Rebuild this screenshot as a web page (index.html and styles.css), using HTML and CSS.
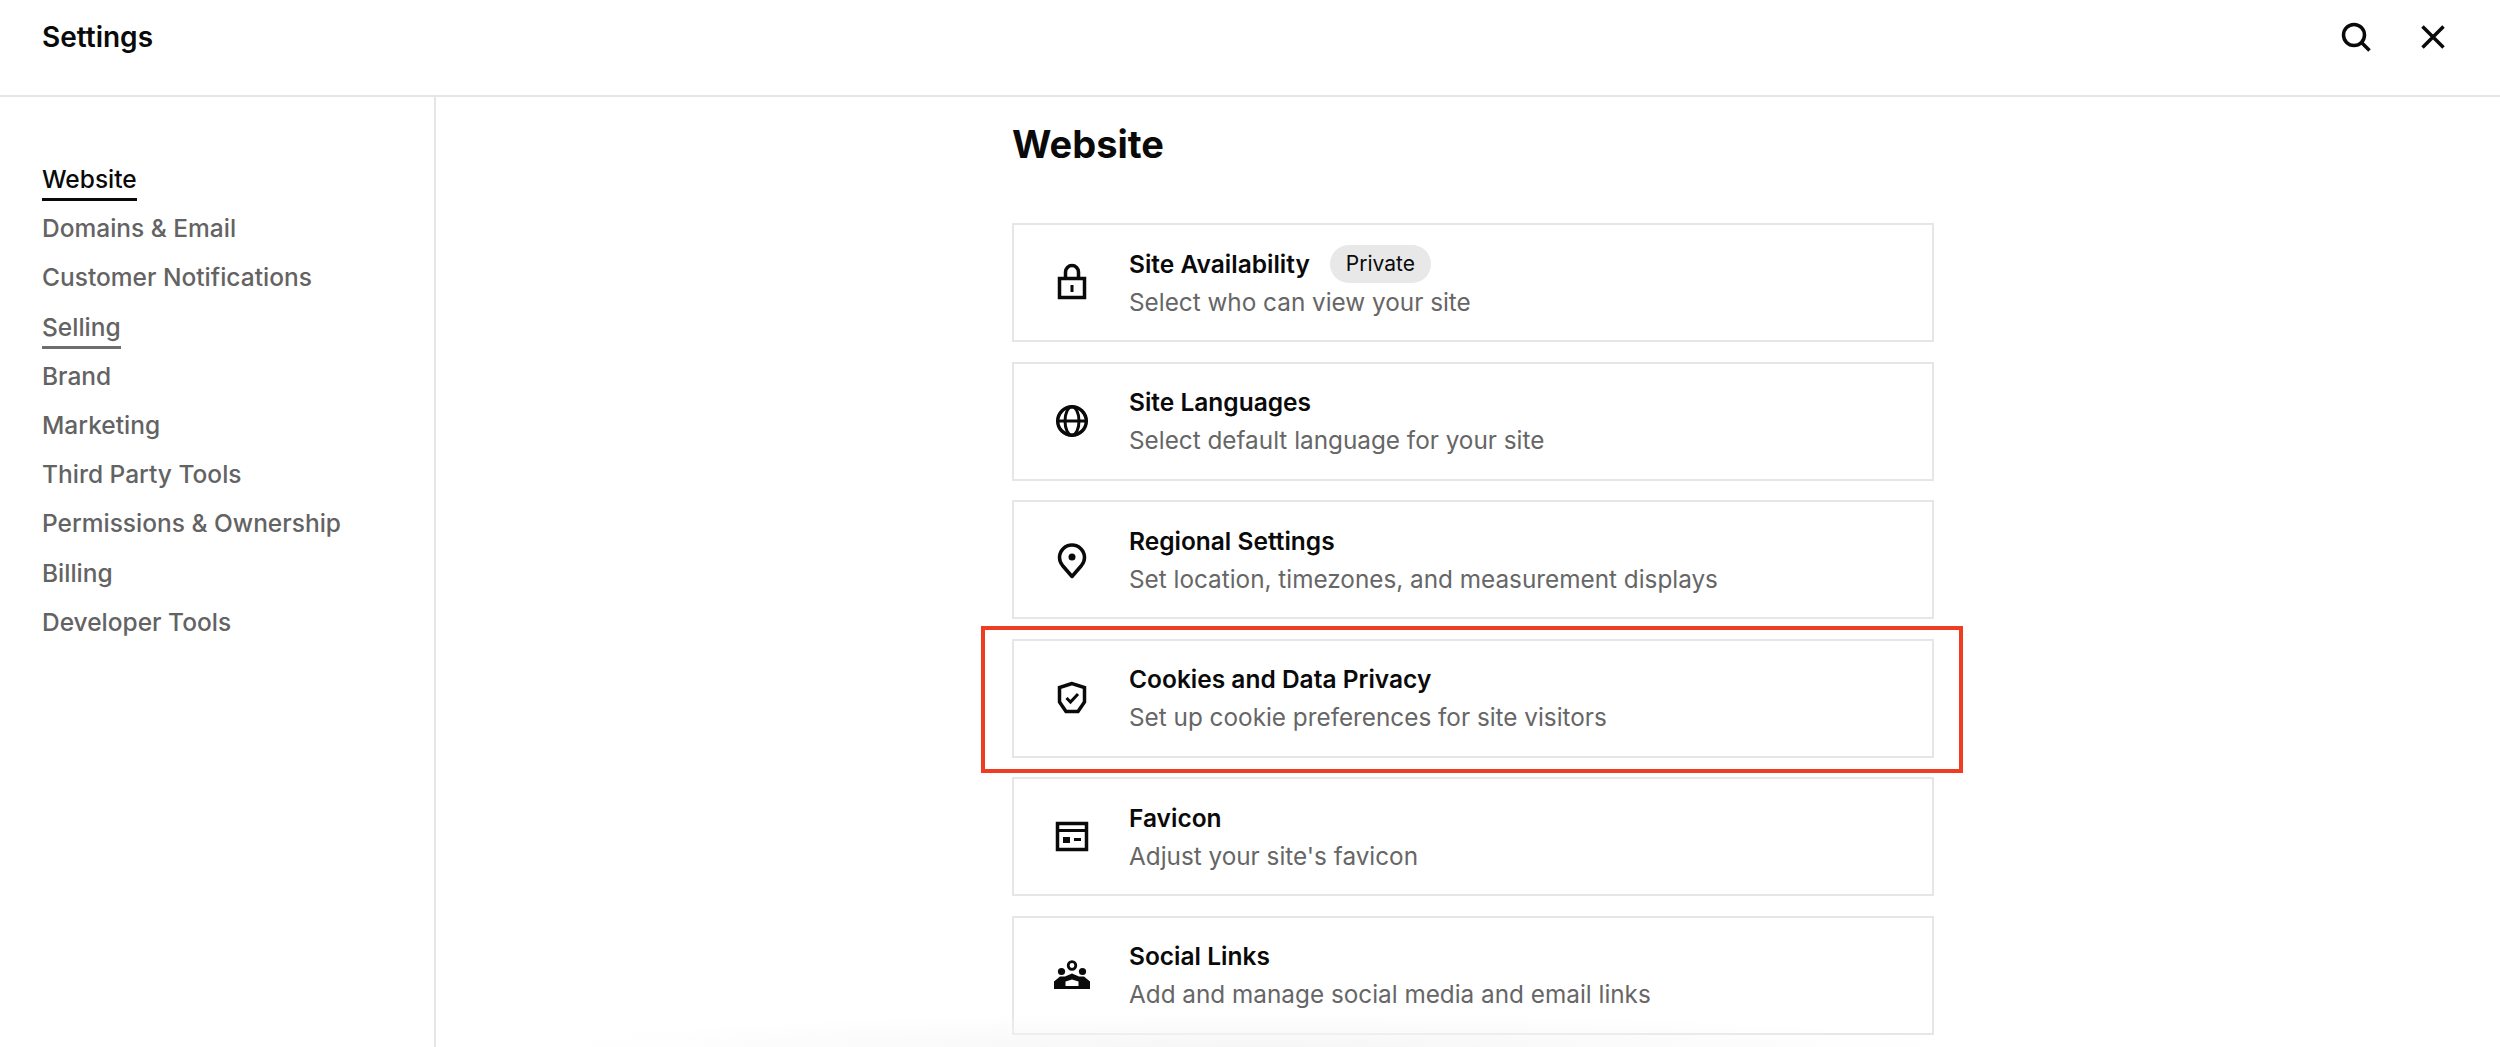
FILE: index.html
```html
<!DOCTYPE html>
<html lang="en">
<head>
  <meta charset="UTF-8">
  <meta name="viewport" content="width=device-width, initial-scale=1.0">
  <title>Settings</title>
  <link rel="stylesheet" href="styles.css">
</head>
<body>
  <header class="top-bar">
    <h1 class="top-title">Settings</h1>
    <div class="top-actions">
      <svg class="top-icon" viewBox="0 0 32 32" fill="none" stroke="#0a0a0a" stroke-width="3.5">
        <circle cx="14" cy="14" r="10.500"/>
        <path d="M22 22l7.500 7.500"/>
      </svg>
      <svg class="top-icon" viewBox="0 0 32 32" fill="none" stroke="#0a0a0a" stroke-width="3.5">
        <path d="M5.500 5.500l21 21M26.500 5.500l-21 21"/>
      </svg>
    </div>
  </header>

  <div class="layout">
    <nav class="side-nav">
      <a class="nav-item active">Website</a>
      <a class="nav-item">Domains &amp; Email</a>
      <a class="nav-item">Customer Notifications</a>
      <a class="nav-item current">Selling</a>
      <a class="nav-item">Brand</a>
      <a class="nav-item">Marketing</a>
      <a class="nav-item">Third Party Tools</a>
      <a class="nav-item">Permissions &amp; Ownership</a>
      <a class="nav-item">Billing</a>
      <a class="nav-item">Developer Tools</a>
    </nav>

    <main class="content">
      <h2 class="page-title">Website</h2>

      <div class="card-list">
        <div class="card">
          <svg class="card-icon" viewBox="0 0 40 40" fill="none" stroke="#0a0a0a" stroke-width="3.500">
            <rect x="7.500" y="15.500" width="25" height="19"/>
            <path d="M13.500 15V9a6.500 6.500 0 0 1 13 0v6"/>
            <path d="M20 22v7" stroke-width="3"/>
          </svg>
          <div class="card-text">
            <div class="card-head">
              <span class="card-title">Site Availability</span>
              <span class="pill">Private</span>
            </div>
            <p class="card-desc">Select who can view your site</p>
          </div>
        </div>

        <div class="card">
          <svg class="card-icon" viewBox="0 0 40 40" fill="none" stroke="#0a0a0a" stroke-width="3.500">
            <circle cx="20" cy="20" r="14.300"/>
            <ellipse cx="20" cy="20" rx="7" ry="14.300" stroke-width="3"/>
            <path d="M5 20h30" stroke-width="3"/>
          </svg>
          <div class="card-text">
            <span class="card-title">Site Languages</span>
            <p class="card-desc">Select default language for your site</p>
          </div>
        </div>

        <div class="card">
          <svg class="card-icon" viewBox="0 0 40 40" fill="none" stroke="#0a0a0a" stroke-width="3.500">
            <path d="M20 36.500L10.500 25.500C8.800 23.400 7.500 20.800 7.500 17.500a12.500 12.500 0 0 1 25 0c0 3.300-1.300 5.900-3 8z" stroke-linejoin="round"/>
            <circle cx="20" cy="17" r="3.500" fill="#0a0a0a" stroke="none"/>
          </svg>
          <div class="card-text">
            <span class="card-title">Regional Settings</span>
            <p class="card-desc">Set location, timezones, and measurement displays</p>
          </div>
        </div>

        <div class="card">
          <div class="highlight"></div>
          <svg class="card-icon" viewBox="0 0 40 40" fill="none" stroke="#0a0a0a" stroke-width="3.500">
            <path d="M20 5.500L7.500 9.500V24L14 33.500H26L32.500 24V9.500z"/>
            <path d="M14.500 20l4 4 7.500-8" stroke-width="3"/>
          </svg>
          <div class="card-text">
            <span class="card-title">Cookies and Data Privacy</span>
            <p class="card-desc">Set up cookie preferences for site visitors</p>
          </div>
        </div>

        <div class="card">
          <svg class="card-icon" viewBox="0 0 40 40" fill="none" stroke="#0a0a0a" stroke-width="3.500">
            <rect x="5.500" y="6.500" width="29" height="26"/>
            <path d="M5 13.500h30" stroke-width="3"/>
            <rect x="11" y="20" width="7" height="6" fill="#0a0a0a" stroke="none"/>
            <rect x="22" y="21" width="7" height="3" fill="#0a0a0a" stroke="none"/>
          </svg>
          <div class="card-text">
            <span class="card-title">Favicon</span>
            <p class="card-desc">Adjust your site's favicon</p>
          </div>
        </div>

        <div class="card">
          <svg class="card-icon" viewBox="0 0 40 40" fill="#0a0a0a">
            <circle cx="20" cy="10.500" r="3.800" fill="none" stroke="#0a0a0a" stroke-width="2.800"/>
            <circle cx="9.500" cy="16.500" r="3.600"/>
            <circle cx="30.500" cy="16.500" r="3.600"/>
            <path fill-rule="evenodd" d="M2 34v-7.500L8 21.500h5L20 18.500l7 3h5l6 5V34zM13.500 31h13v-4.500L20 24.500l-6.500 2z"/>
          </svg>
          <div class="card-text">
            <span class="card-title">Social Links</span>
            <p class="card-desc">Add and manage social media and email links</p>
          </div>
        </div>
      </div>
    </main>
  </div>

  <div class="bottom-fade"></div>
</body>
</html>
```

FILE: styles.css
```css
* {
  box-sizing: border-box;
}

html, body {
  margin: 0;
  padding: 0;
  height: 100%;
}

body {
  position: relative;
  overflow: hidden;
  background-color: #fff;
  color: #0a0a0a;
  font-family: 'Inter', sans-serif;
}

/* top bar */
.top-bar {
  height: 97px;
  padding: 21px 51px 0 42px;
  display: flex;
  justify-content: space-between;
  align-items: flex-start;
  border-bottom: 2px solid #e6e6e6;
}

.top-title {
  margin: 0;
  font-size: 28px;
  line-height: 32px;
  font-weight: 600;
}

.top-actions {
  display: flex;
  gap: 45px;
}

.top-icon {
  width: 32px;
  height: 32px;
}

/* sidebar + main */
.layout {
  display: flex;
  height: 950px;
}

.side-nav {
  width: 436px;
  flex-shrink: 0;
  padding: 62px 0 0 42px;
  border-right: 2px solid #e6e6e6;
  display: flex;
  flex-direction: column;
  align-items: flex-start;
}

.nav-item {
  height: 49.200px;
  padding-top: 4px;
  font-size: 24.500px;
  line-height: 32px;
  font-weight: 500;
  color: #636363;
}

.nav-item.active,
.nav-item.current {
  height: 42px;
  margin-bottom: 7.200px;
  border-bottom: 3px solid #6e6e6e;
}

.nav-item.active {
  color: #0a0a0a;
  border-bottom-color: #0a0a0a;
}

.content {
  padding-left: 576px;
}

.page-title {
  margin: 0;
  padding-top: 22px;
  height: 126px;
  font-size: 38px;
  line-height: 50px;
  font-weight: 700;
}

.card-list {
  width: 922px;
  display: flex;
  flex-direction: column;
  gap: 19.600px;
}

.card {
  position: relative;
  height: 119px;
  padding-left: 38px;
  display: flex;
  align-items: center;
  gap: 37px;
  border: 2px solid #e6e6e6;
}

.card-icon {
  width: 40px;
  height: 40px;
  flex-shrink: 0;
}

.card-text {
  display: flex;
  flex-direction: column;
  gap: 6px;
}

.card-head {
  display: flex;
  align-items: center;
  gap: 20px;
}

.card-title {
  font-size: 24.500px;
  line-height: 32px;
  font-weight: 600;
}

.pill {
  margin: -3px 0;
  padding: 0 16px;
  border-radius: 20px;
  background-color: #e8e8e8;
  font-size: 21px;
  line-height: 38px;
}

.card-desc {
  margin: 0;
  font-size: 24.300px;
  line-height: 32px;
  color: #666;
}

/* red box round the cookies card */
.highlight {
  position: absolute;
  top: -15px;
  bottom: -17px;
  left: -33px;
  right: -31px;
  border: 4px solid #ee3d23;
  pointer-events: none;
}

.bottom-fade {
  position: absolute;
  left: 560px;
  width: 1400px;
  bottom: 0;
  height: 34px;
  background: radial-gradient(ellipse 50% 100% at 50% 100%, #f6f6f6, rgba(246, 246, 246, 0));
  pointer-events: none;
}
```
